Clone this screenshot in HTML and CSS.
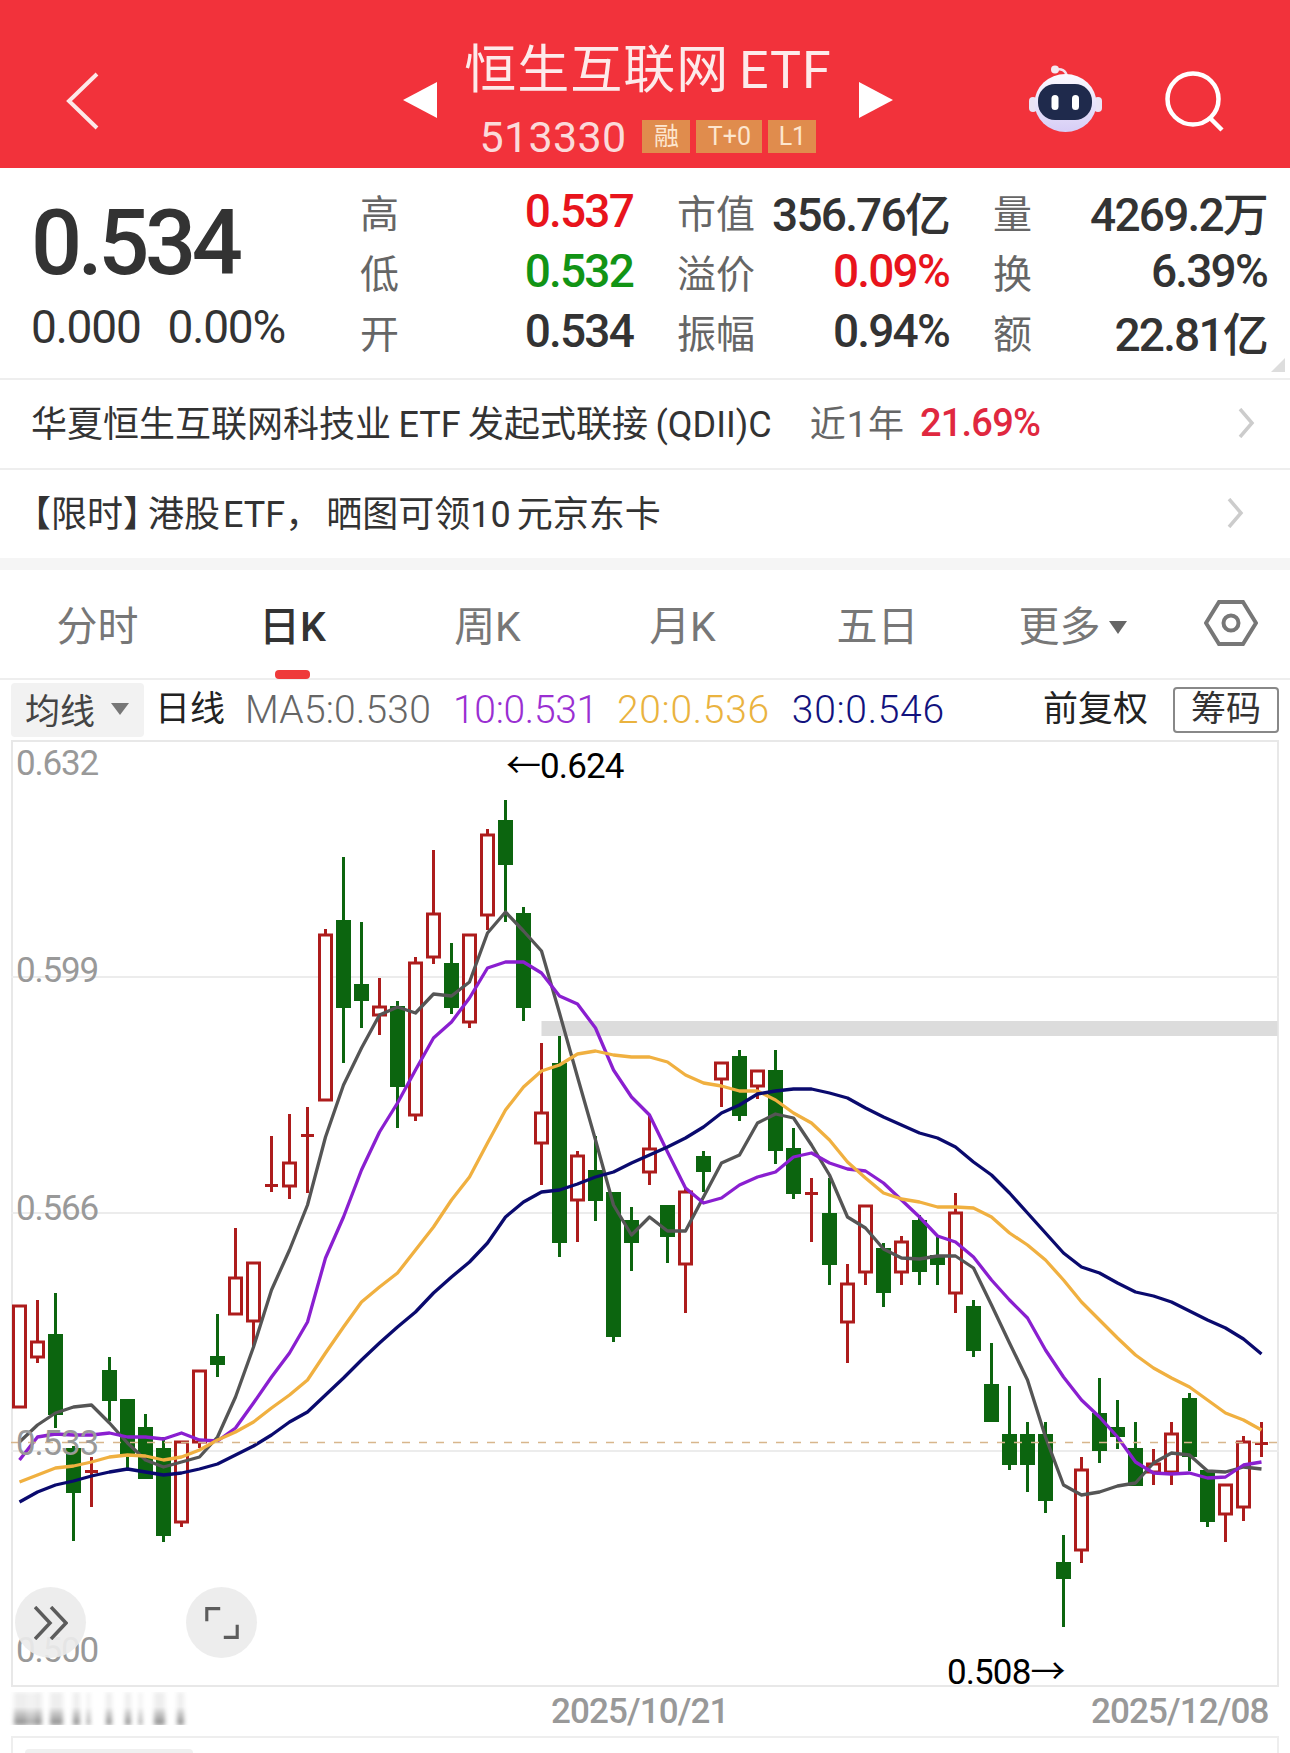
FILE: index.html
```html
<!DOCTYPE html>
<html lang="zh-CN">
<head>
  <meta charset="UTF-8">
  <meta name="viewport" content="width=device-width, initial-scale=1.0">
  <title>恒生互联网ETF</title>
  <link rel="stylesheet" href="styles.css">
</head>
<body>

  <header class="top-bar">
    <svg class="back-icon" viewBox="0 0 33 58"><path d="M31 2 L3 29 L31 56"/></svg>
    <div class="title-block">
      <span class="tri tri-left"></span>
      <div class="title-text">
        <h1>恒生互联网 ETF</h1>
        <div class="code-line">
          <span class="code">513330</span>
          <span class="badge badge-rong">融</span>
          <span class="badge badge-t0">T+0</span>
          <span class="badge badge-l1">L1</span>
        </div>
      </div>
      <span class="tri tri-right"></span>
    </div>
    <svg class="robot-icon" viewBox="0 0 75 67">
      <defs>
        <linearGradient id="robotHead" x1="0" y1="0" x2="0" y2="1">
          <stop offset="0" stop-color="#fbfaff"/>
          <stop offset="1" stop-color="#d6cdf6"/>
        </linearGradient>
      </defs>
      <path d="M27 5 C33 3 38 5 39 12" fill="none" stroke="#f3e3ee" stroke-width="2.5"/>
      <circle cx="27" cy="4.5" r="4" fill="#f5e9f1"/>
      <rect x="1" y="32" width="8" height="15" rx="4" fill="#e9e3f5"/>
      <rect x="66" y="32" width="8" height="15" rx="4" fill="#e9e3f5"/>
      <ellipse cx="37.5" cy="38" rx="31" ry="29" fill="url(#robotHead)"/>
      <rect x="10" y="19" width="54" height="36" rx="17" fill="#1f2a4c"/>
      <rect x="23.5" y="30" width="7" height="15" rx="3.5" fill="#fff"/>
      <rect x="44" y="30" width="7" height="15" rx="3.5" fill="#fff"/>
    </svg>
    <svg class="search-icon" viewBox="0 0 60 62">
      <circle cx="28" cy="28" r="25.5"/>
      <path d="M45 47 L57 59"/>
    </svg>
  </header>

  <section class="quote">
    <div class="quote-main">
      <div class="price">0.534</div>
      <div class="change"><span>0.000</span><span>0.00%</span></div>
    </div>
    <div class="stats">
      <span class="lab">高</span><span class="val up">0.537</span>
      <span class="lab lab-mid">市值</span><span class="val">356.76亿</span>
      <span class="lab lab-mid">量</span><span class="val">4269.2万</span>

      <span class="lab">低</span><span class="val down">0.532</span>
      <span class="lab lab-mid">溢价</span><span class="val up">0.09%</span>
      <span class="lab lab-mid">换</span><span class="val">6.39%</span>

      <span class="lab">开</span><span class="val">0.534</span>
      <span class="lab lab-mid">振幅</span><span class="val">0.94%</span>
      <span class="lab lab-mid">额</span><span class="val">22.81亿</span>
    </div>
    <span class="corner"></span>
  </section>

  <a class="list-row">
    <span class="fund-name">华夏恒生互联网科技业 ETF 发起式联接 (QDII)C</span>
    <span class="fund-term">近1年</span>
    <span class="fund-rate">21.69%</span>
    <svg class="row-arrow arrow-a" viewBox="0 0 17 30"><path d="M2 1 L14 15 L2 29"/></svg>
  </a>
  <a class="list-row list-row-last">
    <span class="promo">【限时<span class="promo-close">】</span>港股<span class="promo-latin">ETF</span><span class="promo-comma">，</span>晒图可领10 元京东卡</span>
    <svg class="row-arrow arrow-b" viewBox="0 0 17 30"><path d="M2 1 L14 15 L2 29"/></svg>
  </a>

  <nav class="tabs">
    <a class="tab">分时</a>
    <a class="tab tab-active">日K</a>
    <a class="tab">周K</a>
    <a class="tab">月K</a>
    <a class="tab">五日</a>
    <a class="tab">更多<i class="tab-caret"></i></a>
    <svg class="gear-icon" viewBox="0 0 54 46">
      <path d="M15 2 H39 L52 23 L39 44 H15 L2 23Z"/>
      <circle cx="27" cy="23" r="7.5"/>
    </svg>
  </nav>

  <div class="ma-bar">
    <div class="ma-select">均线<i class="select-caret"></i></div>
    <span class="ma-type">日线</span>
    <span class="ma ma5">MA5:0.530</span>
    <span class="ma ma10">10:0.531</span>
    <span class="ma ma20">20:0.536</span>
    <span class="ma ma30">30:0.546</span>
    <span class="adjust">前复权</span>
    <span class="chips">筹码</span>
  </div>

  <div class="chart" id="chart">
    <span class="y-label y1">0.632</span>
    <span class="y-label y2">0.599</span>
    <span class="y-label y3">0.566</span>
    <span class="y-label y4">0.533</span>
    <span class="y-label y5">0.500</span>
    <span class="mark mark-high">←0.624</span>
    <span class="mark mark-low">0.508→</span>
    <button class="round-btn btn-more">
      <svg viewBox="0 0 34 34"><path d="M1 1 L16 17 L1 33 M17 1 L32 17 L17 33"/></svg>
    </button>
    <button class="round-btn btn-full">
      <svg viewBox="0 0 38 36"><path d="M2 16 V2 H17 M36 20 V34 H21"/></svg>
    </button>
  </div>

  <div class="x-axis">
    <span class="date-smear"></span>
    <span class="date date-mid">2025/10/21</span>
    <span class="date date-end">2025/12/08</span>
  </div>

  <div class="sub-panel"><span class="sub-tab"></span></div>

  <script src="chart.js"></script>
</body>
</html>
```
FILE: styles.css
```css
* {
  margin: 0;
  padding: 0;
  box-sizing: border-box;
}

body {
  width: 1290px;
  height: 1753px;
  overflow: hidden;
  background-color: #fff;
  font-family: Roboto, "Noto Sans CJK SC", sans-serif;
  color: #333;
}

/* top red bar */
.top-bar {
  height: 168px;
  background-color: #f2323b;
  display: flex;
  align-items: flex-start;
  padding-left: 66px;
}

.back-icon {
  width: 33px;
  height: 58px;
  margin-top: 72px;
  fill: none;
  stroke: #fde8e8;
  stroke-width: 4;
}

.title-block {
  width: 490px;
  margin-left: 304px;
  display: flex;
  justify-content: space-between;
}

.tri {
  width: 0;
  height: 0;
  margin-top: 82px;
  border-top: 18px solid transparent;
  border-bottom: 18px solid transparent;
}

.tri-left {
  border-right: 34px solid #fff;
}

.tri-right {
  border-left: 34px solid #fff;
}

.title-text {
  display: flex;
  flex-direction: column;
  align-items: center;
  padding-top: 39px;
}

.title-text h1 {
  font-size: 52px;
  line-height: 63px;
  font-weight: 400;
  color: #fdeaea;
  letter-spacing: 1px;
  word-spacing: -4px;
  white-space: nowrap;
}

.code-line {
  display: flex;
  align-items: center;
  margin-top: 18px;
  height: 33px;
}

.code {
  font-size: 43px;
  letter-spacing: 0.3px;
  color: #fbdada;
  margin-right: 16px;
}

.badge {
  height: 33px;
  line-height: 33px;
  background-color: #e08c4d;
  color: #fde6cf;
  font-size: 25px;
  text-align: center;
  margin-right: 6px;
}

.badge-rong { width: 48px; }
.badge-t0 { width: 66px; }
.badge-l1 { width: 48px; margin-right: 0; }

.robot-icon {
  width: 75px;
  height: 67px;
  margin-top: 65px;
  margin-left: 135px;
}

.search-icon {
  width: 60px;
  height: 62px;
  margin-top: 71px;
  margin-left: 62px;
  fill: none;
  stroke: #fff;
  stroke-width: 4.5;
}

/* price and stats block */
.quote {
  position: relative;
  height: 212px;
  display: flex;
  border-bottom: 2px solid #eee;
}

.quote-main {
  width: 360px;
  padding-left: 31px;
  padding-top: 33px;
}

.price {
  font-size: 90px;
  line-height: 86px;
  font-weight: 500;
  letter-spacing: -4.4px;
  color: #333;
}

.change {
  display: flex;
  gap: 27px;
  margin-top: 14px;
  font-size: 46px;
  line-height: 52px;
  letter-spacing: -1.2px;
}

.stats {
  display: grid;
  grid-template-columns: 37px 236px 121px 195px 82px 236px;
  grid-auto-rows: 60px;
  padding-top: 13px;
  align-items: center;
}

.lab {
  font-size: 39px;
  color: #666;
  white-space: nowrap;
}

.lab-mid {
  padding-left: 44px;
}

.val {
  font-size: 46px;
  font-weight: 500;
  text-align: right;
  color: #333;
  letter-spacing: -1.8px;
  white-space: nowrap;
}

.up {
  color: #e8141c;
}

.down {
  color: #129415;
}

.corner {
  position: absolute;
  right: 5px;
  bottom: 6px;
  width: 14px;
  height: 14px;
  background-color: #ddd;
  clip-path: polygon(100% 0, 100% 100%, 0 100%);
}

/* links */
.list-row {
  position: relative;
  height: 90px;
  display: flex;
  align-items: center;
  padding-left: 31px;
  padding-bottom: 6px;
  border-bottom: 2px solid #eee;
  font-size: 36px;
  color: #333;
}

.list-row-last {
  height: 100px;
  padding-bottom: 6px;
  border-bottom: 12px solid #f5f5f5;
}

.fund-name {
  word-spacing: -1.5px;
}

.fund-term {
  margin-left: 38px;
  color: #666;
  letter-spacing: 1px;
}

.fund-rate {
  margin-left: 15px;
  margin-top: 4px;
  font-size: 38px;
  font-weight: 500;
  color: #e0283f;
  letter-spacing: -0.8px;
}

.promo {
  margin-left: -16px;
  word-spacing: -3px;
}

.promo-close {
  font-feature-settings: "halt";
  margin-right: 7px;
}

.promo-latin {
  margin-left: 3px;
}

.promo-comma {
  margin-right: 5px;
}

.row-arrow {
  position: absolute;
  width: 17px;
  height: 30px;
  fill: none;
  stroke: #ccc;
  stroke-width: 3.5;
}

.arrow-a { right: 35px; top: 28px; }
.arrow-b { right: 46px; top: 28px; }

/* tab strip */
.tabs {
  height: 110px;
  display: flex;
  align-items: center;
  border-bottom: 2px solid #eee;
  padding-bottom: 3px;
}

.tab {
  position: relative;
  width: 195px;
  text-align: center;
  font-size: 41px;
  color: #777;
}

.tab-active {
  color: #333;
  font-weight: 500;
}

.tab-active::after {
  content: "";
  position: absolute;
  left: 80px;
  bottom: -26px;
  width: 35px;
  height: 9px;
  border-radius: 4px;
  background-color: #ef3a3a;
}

.tab-caret {
  display: inline-block;
  margin-left: 8px;
  vertical-align: 7px;
  border-top: 13px solid #666;
  border-left: 9px solid transparent;
  border-right: 9px solid transparent;
}

.gear-icon {
  width: 54px;
  height: 46px;
  margin-left: 34px;
  fill: none;
  stroke: #777;
  stroke-width: 4;
}

/* moving average legend */
.ma-bar {
  height: 60px;
  display: flex;
  align-items: center;
  padding: 0 11px 0 11px;
  gap: 22px;
}

.ma-select {
  width: 133px;
  height: 54px;
  display: flex;
  align-items: center;
  padding-left: 14px;
  padding-bottom: 3px;
  margin-right: -11px;
  background-color: #f2f2f2;
  border-radius: 4px;
  font-size: 35px;
  color: #444;
}

.select-caret {
  margin-left: 16px;
  border-top: 12px solid #777;
  border-left: 9px solid transparent;
  border-right: 9px solid transparent;
}

.ma-type {
  font-size: 35px;
  line-height: 50px;
  margin-right: -2px;
  color: #222;
}

.ma {
  font-size: 39px;
  font-weight: 300;
}

.ma5 { color: #666; letter-spacing: 0.2px; }
.ma10 { color: #9a2fd2; letter-spacing: -0.3px; margin-right: -3px; }
.ma20 { color: #eab33f; letter-spacing: 0.7px; }
.ma30 { color: #12127e; letter-spacing: 0.7px; }

.adjust {
  margin-left: auto;
  font-size: 35px;
  line-height: 50px;
  color: #222;
}

.chips {
  width: 106px;
  height: 46px;
  margin-left: 3px;
  line-height: 42px;
  text-align: center;
  font-size: 35px;
  color: #333;
  border: 2px solid #888;
  border-radius: 4px;
}

/* chart canvas */
.chart {
  position: relative;
  width: 1268px;
  height: 948px;
  margin-left: 11px;
}

.chart svg.plot {
  display: block;
}

.y-label {
  position: absolute;
  left: 5px;
  font-size: 35px;
  line-height: 40px;
  color: #999;
  letter-spacing: -1.2px;
}

.y1 { top: 4px; }
.y2 { top: 211px; }
.y3 { top: 449px; }
.y4 { top: 684px; }
.y5 { top: 891px; }

.mark {
  position: absolute;
  font-size: 35px;
  line-height: 40px;
  color: #000;
  letter-spacing: -0.9px;
}

.mark-high { left: 495px; top: 7px; }
.mark-low { left: 936px; top: 913px; }

.round-btn {
  position: absolute;
  top: 847px;
  width: 71px;
  height: 71px;
  border: none;
  border-radius: 50%;
  background-color: rgba(236, 236, 236, 0.92);
  display: flex;
  align-items: center;
  justify-content: center;
}

.btn-more { left: 4px; }
.btn-full { left: 175px; }

.round-btn svg {
  width: 34px;
  height: 34px;
  fill: none;
  stroke: #5c5c5c;
  stroke-width: 3.5;
}

/* dates below the chart */
.x-axis {
  position: relative;
  height: 48px;
  font-size: 35px;
  font-weight: 500;
  color: #999;
}

.date {
  position: absolute;
  top: 2px;
  line-height: 44px;
  letter-spacing: -0.9px;
}

.date-mid { left: 551px; }
.date-end { left: 1091px; }

/* smeared-out date, it is not readable in the source either */
.date-smear {
  position: absolute;
  left: 0;
  top: 4px;
  width: 190px;
  height: 33px;
  background-image: linear-gradient(to right,
    transparent 14px, #8c8c8c 14px 26px, #aaa 26px 35px, #8c8c8c 35px 42px, transparent 42px 50px,
    #8c8c8c 50px 63px, transparent 63px 73px, #8c8c8c 73px 80px, transparent 80px 87px,
    #8c8c8c 87px 90px, transparent 90px 106px, #8c8c8c 106px 112px, transparent 112px 125px,
    #8c8c8c 125px 131px, transparent 131px 139px, #8c8c8c 139px 142px, transparent 142px 154px,
    #8c8c8c 154px 165px, transparent 165px 177px, #8c8c8c 177px 184px, transparent 184px);
  -webkit-mask-image: linear-gradient(to bottom, rgba(0, 0, 0, 0.15), rgba(0, 0, 0, 0.15) 45%, rgba(0, 0, 0, 0.5) 65%, #000);
  mask-image: linear-gradient(to bottom, rgba(0, 0, 0, 0.15), rgba(0, 0, 0, 0.15) 45%, rgba(0, 0, 0, 0.5) 65%, #000);
  filter: blur(2px);
}

.sub-panel {
  height: 30px;
  margin: 0 11px;
  border: 2px solid #eee;
  border-bottom: none;
  padding: 11px 0 0 12px;
}

.sub-tab {
  display: block;
  width: 168px;
  height: 10px;
  background-color: #f0f0f0;
  border-radius: 4px 4px 0 0;
}
```
FILE: chart.js
```js
// chart area sits at x 11, y 740 on the page; all numbers below are page coords
const SVG_NS = "http://www.w3.org/2000/svg";
const X0 = 19.5, STEP = 18, LEFT = 11, TOP = 740, W = 1268, H = 948;
const RED = "#ad1c1c", GREEN = "#0c650f";

// [colour, wick top, body top, body bottom, wick bottom]
const candles = [
  ["r",1306,1306,1407,1407],["r",1300,1342,1357,1363],["g",1293,1334,1415,1428],["g",1446,1448,1493,1541],
  ["r",1457,1470,1471,1507],["g",1357,1370,1401,1421],["g",1399,1399,1457,1468],["g",1414,1427,1479,1479],
  ["g",1437,1448,1536,1542],["r",1442,1442,1522,1527],["r",1371,1371,1442,1448],["g",1314,1356,1365,1377],
  ["r",1228,1278,1314,1314],["r",1263,1263,1321,1348],["r",1136,1184,1185,1192],["r",1114,1163,1186,1199],
  ["r",1107,1134,1135,1193],["r",929,935,1100,1100],["g",857,920,1008,1063],["g",922,984,1001,1028],
  ["r",978,1007,1015,1035],["g",1001,1006,1087,1128],["r",957,963,1115,1121],["r",850,914,957,964],
  ["g",943,963,1008,1014],["r",935,935,1022,1028],["r",829,835,915,930],["g",800,820,865,922],
  ["g",907,913,1008,1021],["r",1043,1113,1143,1185],["g",1036,1063,1243,1257],["r",1151,1156,1200,1242],
  ["g",1136,1170,1201,1221],["g",1192,1192,1337,1342],["g",1207,1220,1243,1271],["r",1116,1149,1172,1185],
  ["g",1205,1205,1237,1263],["r",1188,1192,1264,1313],["g",1151,1156,1172,1192],["r",1063,1063,1079,1107],
  ["g",1050,1056,1116,1121],["r",1071,1071,1086,1099],["g",1050,1070,1151,1164],["g",1128,1148,1194,1199],
  ["r",1178,1192,1193,1242],["g",1178,1213,1265,1285],["r",1264,1284,1322,1363],["r",1206,1206,1272,1285],
  ["g",1243,1248,1293,1307],["r",1236,1242,1272,1285],["g",1215,1220,1272,1285],["g",1237,1255,1265,1285],
  ["r",1193,1213,1293,1313],["g",1300,1306,1351,1357],["g",1343,1384,1422,1422],["g",1386,1434,1465,1470],
  ["g",1422,1434,1465,1492],["g",1422,1434,1501,1513],["g",1535,1562,1579,1627],["r",1457,1470,1550,1563],
  ["g",1378,1413,1451,1463],["g",1400,1427,1437,1449],["g",1422,1448,1486,1486],["r",1449,1464,1472,1485],
  ["r",1422,1434,1472,1485],["g",1393,1398,1457,1471],["g",1470,1470,1522,1527],["r",1485,1485,1514,1542],
  ["r",1436,1442,1507,1521],["r",1422,1442,1443,1457]
];

// moving averages, one y per candle
const ma5 = [1442,1425,1413,1407,1405,1423,1443,1460,1467,1462,1457,1437,1397,1347,1290,1250,1205,1137,1085,1048,
  1015,1007,1013,994,996,982,933,912,931,951,1013,1077,1140,1205,1235,1217,1231,1231,1197,1163,
  1155,1123,1114,1118,1145,1175,1217,1228,1249,1258,1259,1256,1256,1268,1305,1343,1380,1437,1485,1495,
  1492,1486,1483,1463,1453,1455,1471,1472,1467,1469];
const ma10 = [1460,1437,1434,1435,1435,1433,1437,1437,1439,1433,1440,1441,1428,1403,1377,1353,1322,1258,1217,1170,
  1132,1103,1070,1038,1022,998,968,962,962,973,996,1004,1028,1070,1097,1115,1152,1188,1203,1198,
  1185,1177,1172,1157,1153,1163,1169,1171,1183,1200,1217,1236,1242,1257,1280,1300,1318,1350,1377,1400,
  1417,1437,1462,1473,1474,1473,1478,1477,1465,1462];
const ma20 = [1482,1475,1468,1466,1462,1457,1455,1456,1460,1457,1450,1440,1432,1422,1408,1395,1380,1353,1327,1302,
  1287,1273,1250,1227,1200,1177,1143,1110,1087,1071,1065,1054,1051,1055,1057,1057,1062,1075,1083,1086,
  1091,1091,1100,1113,1123,1140,1162,1178,1193,1199,1202,1207,1207,1208,1217,1233,1245,1260,1280,1302,
  1320,1338,1355,1368,1378,1387,1400,1413,1420,1430];
const ma30 = [1502,1492,1485,1481,1476,1472,1469,1472,1475,1473,1469,1464,1455,1446,1435,1422,1412,1395,1378,1360,
  1343,1327,1312,1293,1277,1262,1243,1217,1202,1192,1190,1184,1177,1172,1163,1155,1147,1138,1127,1113,
  1105,1094,1091,1089,1089,1093,1098,1108,1117,1125,1133,1138,1147,1162,1175,1193,1213,1233,1253,1267,
  1273,1283,1292,1296,1302,1311,1320,1328,1339,1354];

function el(name, attrs, parent) {
  const node = document.createElementNS(SVG_NS, name);
  for (const key in attrs) {
    node.setAttribute(key, attrs[key]);
  }
  parent.appendChild(node);
  return node;
}

function drawCandle(plot, c, i) {
  const x = X0 + STEP * i;
  const colour = c[0] === "r" ? RED : GREEN;
  el("line", { x1: x, x2: x, y1: c[1], y2: c[4], stroke: colour, "stroke-width": 3 }, plot);
  if (c[0] === "g") {
    el("rect", { x: x - 7.5, y: c[2], width: 15, height: c[3] - c[2], fill: colour }, plot);
  } else if (c[3] - c[2] < 4) {
    el("rect", { x: x - 6.5, y: c[2], width: 13, height: 3, fill: colour }, plot);
  } else {
    el("rect", { x: x - 6, y: c[2], width: 12, height: c[3] - c[2], fill: "#fff", stroke: colour, "stroke-width": 3 }, plot);
  }
}

function drawLine(plot, ys, colour) {
  const points = ys.map((y, i) => (X0 + STEP * i) + "," + y).join(" ");
  el("polyline", { points: points, fill: "none", stroke: colour, "stroke-width": 3.3, "stroke-linejoin": "round" }, plot);
}

const plot = document.createElementNS(SVG_NS, "svg");
plot.setAttribute("class", "plot");
plot.setAttribute("width", W);
plot.setAttribute("height", H);
plot.setAttribute("viewBox", LEFT + " " + TOP + " " + W + " " + H);

const chartBox = document.getElementById("chart");
chartBox.insertBefore(plot, chartBox.firstChild);

el("rect", { x: LEFT + 1, y: TOP + 1, width: W - 2, height: H - 3, fill: "none", stroke: "#e8e8e8", "stroke-width": 2 }, plot);
[977, 1213, 1451].forEach(function (y) {
  el("line", { x1: LEFT, x2: LEFT + W, y1: y, y2: y, stroke: "#ececec", "stroke-width": 2 }, plot);
});
el("rect", { x: 541.5, y: 1021, width: 736, height: 15, fill: "#dcdcdc" }, plot);

candles.forEach(function (c, i) {
  drawCandle(plot, c, i);
});

drawLine(plot, ma5, "#555555");
drawLine(plot, ma10, "#8a1fd0");
drawLine(plot, ma20, "#f0b040");
drawLine(plot, ma30, "#0a0a6e");

el("line", { x1: LEFT, x2: LEFT + W, y1: 1442.5, y2: 1442.5, stroke: "#d8b68c", "stroke-width": 1.5, "stroke-dasharray": "8 9" }, plot);
```
